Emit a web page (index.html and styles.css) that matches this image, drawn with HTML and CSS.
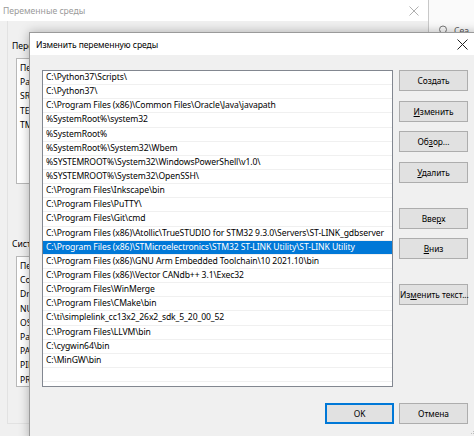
FILE: index.html
```html
<!DOCTYPE html>
<html lang="ru">
<head>
<meta charset="utf-8">
<link rel="stylesheet" href="styles.css">
</head>
<body>
<div class="desktop">
  <div class="bgwin">
    <div class="bg-title">
      <span>Переменные среды</span>
      <svg class="bg-x" width="10" height="10" viewBox="0 0 10 10"><path d="M0.5 0.5L9.5 9.5M9.5 0.5L0.5 9.5" stroke="#b0b0b0" stroke-width="1"/></svg>
    </div>
    <div class="bg-body">
      <div class="bg-frame">
        <div class="bg-label first">Переменные среды пользователя для user</div>
        <div class="bg-list one">
          <div>Переменная</div><div>Path</div><div>SRC</div><div>TEMP</div><div>TMP</div>
        </div>
        <div class="bg-label second">Системные переменные</div>
        <div class="bg-list two">
          <div>Переменная</div><div>ComSpec</div><div>DriverData</div><div>NUMBER_OF_PROCESSORS</div><div>OS</div><div>Path</div><div>PATHEXT</div><div>PIPELINE</div><div>PROCESSOR_ARCHITECTURE</div>
        </div>
      </div>
    </div>
  </div>
  <div class="sidewin">
    <svg class="search-ico" width="10" height="11" viewBox="0 0 10 11"><circle cx="5" cy="4.5" r="3.5" fill="none" stroke="#777" stroke-width="1"/><path d="M5 8L5 10.5" stroke="#777"/></svg>
    <span class="search-txt">Сеа</span>
  </div>

  <div class="dialog">
    <div class="dlg-title">
      <span>Изменить переменную среды</span>
      <svg class="dlg-x" width="11" height="11" viewBox="0 0 11 11"><path d="M0.5 0.5L10.5 10.5M10.5 0.5L0.5 10.5" stroke="#222" stroke-width="1"/></svg>
    </div>
    <div class="dlg-body">
      <div class="main">
        <div class="list">
          <div class="row">C:\Python37\Scripts\</div>
          <div class="row">C:\Python37\</div>
          <div class="row">C:\Program Files (x86)\Common Files\Oracle\Java\javapath</div>
          <div class="row">%SystemRoot%\system32</div>
          <div class="row">%SystemRoot%</div>
          <div class="row">%SystemRoot%\System32\Wbem</div>
          <div class="row">%SYSTEMROOT%\System32\WindowsPowerShell\v1.0\</div>
          <div class="row">%SYSTEMROOT%\System32\OpenSSH\</div>
          <div class="row">C:\Program Files\Inkscape\bin</div>
          <div class="row">C:\Program Files\PuTTY\</div>
          <div class="row">C:\Program Files\Git\cmd</div>
          <div class="row">C:\Program Files (x86)\Atollic\TrueSTUDIO for STM32 9.3.0\Servers\ST-LINK_gdbserver</div>
          <div class="row sel">C:\Program Files (x86)\STMicroelectronics\STM32 ST-LINK Utility\ST-LINK Utility</div>
          <div class="row">C:\Program Files (x86)\GNU Arm Embedded Toolchain\10 2021.10\bin</div>
          <div class="row">C:\Program Files (x86)\Vector CANdb++ 3.1\Exec32</div>
          <div class="row">C:\Program Files\WinMerge</div>
          <div class="row">C:\Program Files\CMake\bin</div>
          <div class="row">C:\ti\simplelink_cc13x2_26x2_sdk_5_20_00_52</div>
          <div class="row">C:\Program Files\LLVM\bin</div>
          <div class="row">C:\cygwin64\bin</div>
          <div class="row">C:\MinGW\bin</div>
          <div class="row"></div>
          <div class="row"></div>
        </div>
        <div class="side">
          <button class="btn">Создать</button>
          <button class="btn g10"><u>И</u>зменить</button>
          <button class="btn g9">Об<u>з</u>ор...</button>
          <button class="btn g10"><u>У</u>далить</button>
          <button class="btn g25">Вве<u>р</u>х</button>
          <button class="btn g9"><u>В</u>низ</button>
          <button class="btn g25">Из<u>м</u>енить текст...</button>
        </div>
      </div>
      <div class="footer">
        <button class="btn ok">OK</button>
        <button class="btn">Отмена</button>
      </div>
      <svg class="grip" width="8" height="8" viewBox="0 0 8 8"><g fill="#bdbdbd"><rect x="6" y="0" width="1" height="1"/><rect x="4" y="2" width="1" height="1"/><rect x="6" y="2" width="1" height="1"/><rect x="2" y="4" width="1" height="1"/><rect x="4" y="4" width="1" height="1"/><rect x="6" y="4" width="1" height="1"/></g></svg>
    </div>
  </div>
</div>
</body>
</html>
```

FILE: styles.css
```css
* { box-sizing: border-box; }
html, body { margin: 0; padding: 0; }
body {
  font-family: "Noto Sans", "Open Sans", sans-serif;
  font-size: 8.6px;
  color: #000;
  background: #fff;
}
.desktop {
  position: relative;
  width: 474px;
  height: 436px;
  overflow: hidden;
  background: #fff;
}

/* background window */
.bgwin {
  position: absolute;
  left: 0;
  top: 0;
  width: 429px;
  height: 436px;
  border-right: 1px solid #c8c8c8;
  display: flex;
  flex-direction: column;
  background: #f0f0f0;
}
.bg-title {
  height: 21px;
  background: #fff;
  color: #9a9a9a;
  display: flex;
  align-items: center;
  justify-content: space-between;
  padding: 0 9px 0 3px;
  flex: none;
}
.bg-body {
  flex: 1;
  padding: 0 0 12px 7px;
  display: flex;
}
.bg-frame {
  flex: 1;
  border-left: 1px solid #e2e2e2;
  border-bottom: 1px solid #e2e2e2;
  padding: 18px 0 0 8px;
  display: flex;
  flex-direction: column;
}
.bg-label { line-height: 14px; margin-left: -4px; }
.bg-list {
  width: 396px;
  background: #fff;
  border: 1px solid #b8b8b8;
  padding: 2px 0 0 3px;
}
.bg-list div { height: 14.2px; line-height: 14.2px; white-space: nowrap; }
.bg-list.one { height: 126px; margin-top: 5px; }
.bg-label.second { margin-top: 53px; }
.bg-list.two { height: 131px; margin-top: 5px; }

.sidewin {
  position: absolute;
  left: 429px;
  top: 0;
  width: 45px;
  height: 40px;
  background: #fafafa;
}
.search-ico { position: absolute; left: 9px; top: 25px; }
.search-txt { position: absolute; left: 25px; top: 25px; color: #555; }

/* dialog */
.dialog {
  position: absolute;
  left: 29px;
  top: 32px;
  width: 451px;
  height: 410px;
  border: 1px solid #9a9a9a;
  box-shadow: 0 0 10px rgba(0, 0, 0, 0.28);
  background: #f0f0f0;
  display: flex;
  flex-direction: column;
}
.dlg-title {
  height: 22px;
  background: #fff;
  display: flex;
  align-items: center;
  justify-content: space-between;
  padding: 0 11px 0 6px;
  flex: none;
  font-size: 8.5px;
  letter-spacing: -0.05px;
}
.dlg-body {
  position: relative;
  flex: 1;
  padding: 15px 11px 0 12px;
}
.main {
  display: flex;
  gap: 6px;
}
.list {
  width: 351px;
  height: 317px;
  background: #fff;
  border: 1px solid #828790;
  overflow: hidden;
  letter-spacing: -0.1px;
}
.row {
  height: 14.15px;
  line-height: 13px;
  padding-left: 3px;
  border-bottom: 1px solid #f0f0f0;
  white-space: nowrap;
  overflow: hidden;
}
.row.sel {
  background: #0078d7;
  color: #fff;
}
.side {
  width: 69px;
  display: flex;
  flex-direction: column;
}
.btn {
  font-family: inherit;
  font-size: 8.4px;
  color: #000;
  height: 21px;
  width: 69px;
  padding: 0;
  background: #e1e1e1;
  border: 1px solid #adadad;
  border-radius: 0;
  white-space: nowrap;
  letter-spacing: -0.05px;
}
.side .btn.g10 { margin-top: 10px; }
.side .btn.g9 { margin-top: 9px; }
.side .btn.g25 { margin-top: 25px; }
.footer {
  display: flex;
  justify-content: flex-end;
  gap: 5px;
  margin-top: 16px;
}
.btn.ok { border-color: #0078d7; box-shadow: inset 0 0 0 1px #0078d7; }
.grip { position: absolute; right: 2px; bottom: 4px; }
```
